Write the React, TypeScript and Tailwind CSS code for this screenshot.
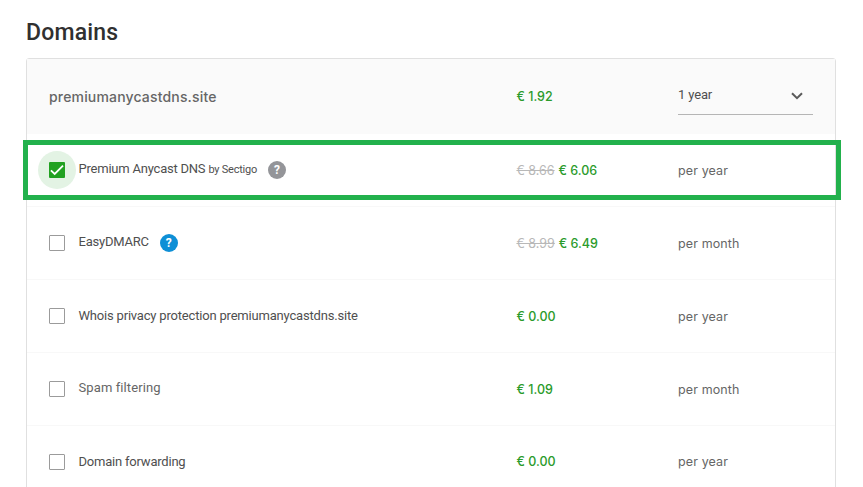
import { useState } from 'react'

type Option = {
  id: string
  label: string
  labelClass: string
  vendor?: string
  help?: 'gray' | 'blue'
  oldPrice?: string
  price: string
  priceClass: string
  period: string
}

const options: Option[] = [
  {
    id: 'anycast',
    label: 'Premium Anycast DNS',
    labelClass: 'pb-[3px] tracking-[-0.22px] text-[#4f4f4f]',
    vendor: 'by Sectigo',
    help: 'gray',
    oldPrice: '€ 8.66',
    price: '€ 6.06',
    priceClass: 'pt-[3px]',
    period: 'per year',
  },
  {
    id: 'dmarc',
    label: 'EasyDMARC',
    labelClass: 'pb-[3px] tracking-[-0.22px] text-[#4f4f4f]',
    help: 'blue',
    oldPrice: '€ 8.99',
    price: '€ 6.49',
    priceClass: 'pt-[3px]',
    period: 'per month',
  },
  {
    id: 'whois',
    label: 'Whois privacy protection premiumanycastdns.site',
    labelClass: 'pb-px tracking-[-0.19px] text-[#4f4f4f]',
    price: '€ 0.00',
    priceClass: 'pt-[3px]',
    period: 'per year',
  },
  {
    id: 'spam',
    label: 'Spam filtering',
    labelClass: 'pb-[3px] tracking-[0.1px] text-[#666666]',
    price: '€ 1.09',
    priceClass: 'pt-[3px]',
    period: 'per month',
  },
  {
    id: 'forwarding',
    label: 'Domain forwarding',
    labelClass: 'pb-px tracking-[-0.21px] text-[#4f4f4f]',
    price: '€ 0.00',
    priceClass: 'pt-px',
    period: 'per year',
  },
]

const Help = ({ color }: { color: 'gray' | 'blue' }) => (
  <span
    className={`ml-[11px] flex size-[18px] items-center justify-center rounded-full text-[12px] leading-none font-bold text-white ${
      color === 'gray' ? 'bg-[#949599]' : 'bg-[#0e8fd6]'
    }`}
  >
    ?
  </span>
)

const Checkbox = ({ checked, onToggle, label }: { checked: boolean; onToggle: () => void; label: string }) => (
  <button
    type="button"
    role="checkbox"
    aria-checked={checked}
    aria-label={label}
    onClick={onToggle}
    className={`-mx-[11px] flex size-[38px] shrink-0 items-center justify-center rounded-full ${
      checked ? 'bg-[#e3f3e4]' : ''
    }`}
  >
    {checked ? (
      <span className="flex size-4 items-center justify-center rounded-[1px] bg-[#21a121]">
        <svg viewBox="0 0 16 16" className="size-4" fill="none" stroke="white" strokeWidth="1.8">
          <path d="M1.9 8.3 5.7 12 14 3.7" />
        </svg>
      </span>
    ) : (
      <span className="size-4 rounded-[1px] border border-[#9b9b9b] bg-white"></span>
    )}
  </button>
)

const App = () => {
  const [selected, setSelected] = useState<string[]>(['anycast'])

  const toggle = (id: string) =>
    setSelected(selected.includes(id) ? selected.filter((item) => item !== id) : [...selected, id])

  return (
    <main className="h-[487px] overflow-hidden bg-white pt-4 pl-[26px] font-['Roboto',sans-serif] text-[13px] text-[#666666]">
      <h1 className="h-[42px] pt-px text-[23px] leading-8 font-medium tracking-[0.2px] text-[#303030]">Domains</h1>

      <section className="w-[810px] rounded-t-[3px] border border-[#e0e0e0]">
        <header className="grid h-[75px] grid-cols-[467.5px_161.5px_1fr] items-center bg-[#fafafa] pl-[22px]">
          <p className="font-['Inter',sans-serif] text-[14px] font-medium tracking-[0.17px] text-[#666666]">
            premiumanycastdns.site
          </p>
          <p className="pt-[2px] font-['Inter',sans-serif] text-[12.5px] font-medium text-[#2b9b2b]">€ 1.92</p>
          <button
            type="button"
            className="flex h-[37px] w-[135px] justify-between border-b border-[#b5b5b5] pr-[10.5px] text-[#4f4f4f]"
          >
            <span className="pt-[7px] leading-5 tracking-[-0.15px]">1 year</span>
            <svg viewBox="0 0 12 8" className="mt-[14px] h-2 w-3" fill="none" stroke="#5a5a5a" strokeWidth="2">
              <path d="M1 1.2 6 6.2 11 1.2" />
            </svg>
          </button>
        </header>

        {options.map((option) => (
          <div
            key={option.id}
            className="relative grid h-[73px] grid-cols-[467.5px_161.5px_1fr] items-center border-b border-[#f8f8f8] pl-[22px]"
          >
            <div className="flex items-center">
              <Checkbox
                checked={selected.includes(option.id)}
                onToggle={() => toggle(option.id)}
                label={option.label}
              />
              <p className={`ml-[13.5px] ${option.labelClass}`}>
                {option.label}
                {option.vendor && <span className="ml-[3px] text-[11px]">{option.vendor}</span>}
              </p>
              {option.help && <Help color={option.help} />}
            </div>
            <p className={`font-['Inter',sans-serif] text-[12.5px] font-medium text-[#2b9b2b] ${option.priceClass}`}>
              {option.oldPrice && <s className="mr-[4px] font-normal text-[#b8b8b8]">{option.oldPrice}</s>}
              {option.price}
            </p>
            <p className={`font-['Inter',sans-serif] text-[12.5px] tracking-[0.12px] ${option.priceClass}`}>
              {option.period}
            </p>
            {option.id === 'anycast' && (
              <div className="pointer-events-none absolute top-[6px] -left-1 h-[60px] w-[818px] border-5 border-[#22b14c]"></div>
            )}
          </div>
        ))}
      </section>
    </main>
  )
}

export default App
